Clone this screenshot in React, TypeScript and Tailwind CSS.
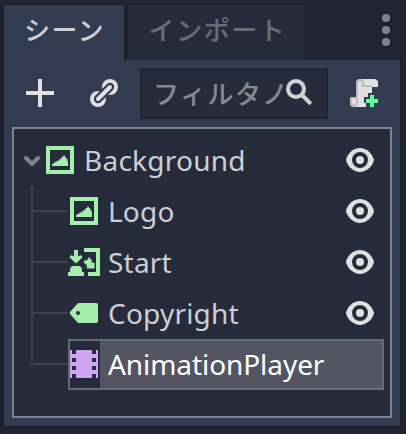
import type { ReactNode } from "react";

const NOTO = "font-['Noto_Sans','Noto_Sans_CJK_JP',sans-serif]";
const JP = "font-['Noto_Sans_CJK_JP',sans-serif] text-[26px] font-medium";

function Icon({ className, children }: { className?: string; children: ReactNode }) {
  return (
    <svg viewBox="0 0 16 16" width="32" height="32" fill="currentColor" className={`-mt-px shrink-0 ${className ?? ""}`}>
      {children}
    </svg>
  );
}

function TextureIcon() {
  return (
    <Icon className="text-[#a5efac]">
      <path fillRule="evenodd" d="M1 1h14v14H1zM3 3v10h10V3z" />
      <path d="M4 11v-1h.7v-.6h1v-.6h1v-.6h1v-.7h1v-1h.9v-.8h.8v.8h.7v1h.6v1.2h.3V11z" />
    </Icon>
  );
}

function ButtonIcon() {
  return (
    <Icon className="text-[#a5efac]">
      <path d="M3 2h2v3.3l1.3-.8L7.3 5.6 4 8.8.7 5.6l1-1.1L3 5.3z" />
      <path d="M1 13v-1a2 2 0 0 1 2-2h2a2 2 0 0 1 2 2v1h1v2H0v-2z" />
      <path d="M8 1h8v14h-6v-2h4V3H8z" />
      <path d="M8 7.3h1.4v-.6h.7v-.9h1v.9h.8v1.7h1.4v2.8H9.4V9.3h-.7v-.7H8z" />
    </Icon>
  );
}

function TagIcon() {
  return (
    <Icon className="text-[#a5efac]">
      <path fillRule="evenodd" d="M5.5 3a1 1 0 0 0-.7.3L1.2 7.3a1 1 0 0 0 0 1.4l3.6 4a1 1 0 0 0 .7.3H14a1 1 0 0 0 1-1V4a1 1 0 0 0-1-1zM5 7a1 1 0 1 1 0 2 1 1 0 0 1 0-2z" />
    </Icon>
  );
}

function FilmIcon() {
  return (
    <Icon className="text-[#cea4f1]">
      <path fillRule="evenodd" d="M1 1h1v2h2V1h8v2h2V1h1v14h-1v-2h-2v2H4v-2H2v2H1zM2 5v2h2V5zM2 9v2h2V9zM12 5v2h2V5zM12 9v2h2V9z" />
    </Icon>
  );
}

function EyeIcon() {
  return (
    <Icon className="text-[#e0e0e0]">
      <path fillRule="evenodd" d="M8 2C5.4 2 2.1 3.9 1.04 7.7a1 1 0 0 0 0 .54C2.1 12 5.4 14 8 14s5.9-2 6.96-5.76a1 1 0 0 0 0-.54C13.8 3.9 10.6 2 8 2zm0 2a4 4 0 0 1 0 8 4 4 0 0 1 0-8zm0 2a2 2 0 0 0 0 4 2 2 0 0 0 0-4z" />
    </Icon>
  );
}

function ChildRow({ icon, label }: { icon: ReactNode; label: string }) {
  return (
    <div className="flex h-[51px] items-center pr-[14px]">
      <div className="ml-[17px] w-[37px] shrink-0 self-stretch">
        <div className="h-[26px] border-b-2 border-l-2 border-[#3c424f]" />
        <div className="h-[25px] border-l-2 border-[#3c424f]" />
      </div>
      {icon}
      <span className="ml-2 flex-1 pb-0.5 tracking-[0.2px]">{label}</span>
      <EyeIcon />
    </div>
  );
}

export default function App() {
  return (
    <div className={`flex h-[434px] w-[406px] flex-col overflow-hidden bg-[#202531] pt-[5px] pl-1 text-[28px] leading-none text-[#cdcfd5] ${NOTO}`}>
      <div className="flex h-[55px] shrink-0">
        <div className={`flex w-[120px] items-center justify-center bg-[#343c51] pb-[7px] pl-px tracking-[1.5px] shadow-[0_0_0_2px_#1b202c] ${JP}`}>シーン</div>
        <div className={`ml-1 flex w-[176px] items-center justify-center bg-[#262c3b] pb-[7px] pl-[3px] tracking-[1.6px] text-[#696d78] ${JP}`}>インポート</div>
        <svg width="8" height="32" viewBox="0 0 8 32" className="mt-[9px] ml-[78px]" fill="#808389">
          <circle cx="4" cy="4" r="4" />
          <circle cx="4" cy="16" r="4" />
          <circle cx="4" cy="28" r="4" />
        </svg>
      </div>
      <div className="flex h-[366px] w-[396px] shrink-0 flex-col bg-[#343c51] px-2 pt-2 pb-2 shadow-[-2px_0_0_#1b202c,2px_0_0_#1b202c,0_2px_0_#1b202c]">
        <div className="flex h-[51px] items-center text-[#e0e0e0]">
          <Icon className="ml-3">
            <path d="M7 1v6H1v2h6v6h2V9h6V7H9V1z" />
          </Icon>
          <Icon className="ml-8">
            <circle cx="11" cy="5" r="4" />
            <circle cx="5" cy="11" r="4" />
            <path d="M11 5 5 11" stroke="#343c51" strokeWidth="4.2" strokeLinecap="round" />
            <path d="M11 5 5 11" stroke="currentColor" strokeWidth="2" strokeLinecap="round" />
          </Icon>
          <div className="ml-5 flex h-[51px] w-[188px] items-center border-2 border-[#1f2433] bg-[#262c3b] pl-[11px]">
            <div className={`w-[131px] pb-px leading-[40px] tracking-[1.5px] whitespace-nowrap text-[#858994] ${JP}`}>フィルタノ</div>
            <Icon className="text-[#d2d3d5]">
              <circle cx="6" cy="6" r="4" fill="none" stroke="currentColor" strokeWidth="2" />
              <path d="M9 9 13.4 13.4" stroke="currentColor" strokeWidth="2" />
            </Icon>
          </div>
          <Icon className="ml-5">
            <path d="M6 1a2 2 0 0 0-2 2v7H1v3a2 2 0 0 0 2 2h6v-2H8v-3h2V8h2V5h3V3a2 2 0 0 0-2-2z" />
            <path d="M6.5 1.4A1.7 1.7 0 0 0 4.4 3v10a1.4 1.4 0 0 1-2.9 0v-2.6h2.3M6 1.5a1.2 1.2 0 0 1 1.4 1.3v1.8H12" fill="none" stroke="#b4b4b4" strokeWidth=".8" />
            <path d="M11 9h2v2h2v2h-2v2h-2v-2H9v-2h2z" fill="#5fff97" />
          </Icon>
        </div>
        <div className="mt-2 h-[291px] border-2 border-[#7d8491] bg-[#262c3b] pt-[6px]">
          <div className="flex h-[51px] items-center pr-[14px]">
            <svg width="16" height="12" viewBox="0 0 16 12" className="ml-[10px]" fill="none" stroke="#7e828b" strokeWidth="4" strokeLinecap="round" strokeLinejoin="round">
              <path d="m2 3 6 6 6-6" />
            </svg>
            <div className="ml-1">
              <TextureIcon />
            </div>
            <span className="ml-2 flex-1 pb-0.5 tracking-[0.25px]">Background</span>
            <EyeIcon />
          </div>
          <ChildRow icon={<TextureIcon />} label="Logo" />
          <ChildRow icon={<ButtonIcon />} label="Start" />
          <ChildRow icon={<TagIcon />} label="Copyright" />
          <div className="flex h-[51px] pr-[6px]">
            <div className="ml-[17px] h-[26px] w-[37px] shrink-0 border-b-2 border-l-2 border-[#3c424f]" />
            <div className="flex flex-1 border-2 border-[#656c79]">
              <div className="-ml-[2px] flex w-8 shrink-0 items-center">
                <FilmIcon />
              </div>
              <div className="flex flex-1 items-center bg-[#535662] pb-0.5 pl-2 tracking-[-0.07px] text-white">AnimationPlayer</div>
            </div>
          </div>
        </div>
      </div>
    </div>
  );
}
